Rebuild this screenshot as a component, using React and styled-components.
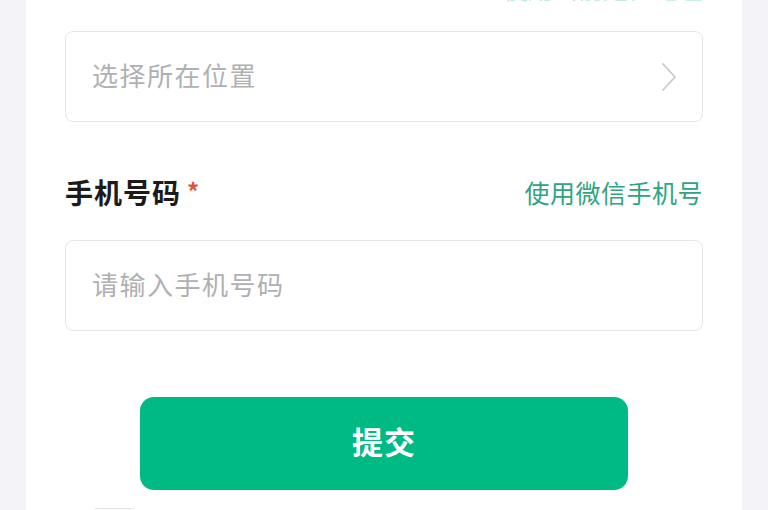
import styled, { createGlobalStyle } from "styled-components";

const GlobalStyle = createGlobalStyle`
    html, body {
        margin: 0;
        padding: 0;
        background: #f3f3f8;
        overflow: hidden;
    }
    * {
        box-sizing: border-box;
    }
`;

const Page = styled.div`
    height: 510px;
    overflow: hidden;
    padding: 0 26px;
    font-family: "Noto Sans CJK SC", "Noto Sans", sans-serif;
`;

const Card = styled.div`
    min-height: 100%;
    background: #ffffff;
    padding: 0 39px 20px;
    display: flex;
    flex-direction: column;
`;

// the page is scrolled: only the foot of this hint line still shows
const TopHint = styled.div`
    height: 31px;
    overflow: hidden;
    display: flex;
    justify-content: flex-end;
    align-items: flex-start;

    span {
        margin-top: -27px;
        font-size: 25px;
        line-height: 31px;
        color: #c4e9df;
    }
`;

const Field = styled.div`
    height: 91px;
    flex-shrink: 0;
    border: 1.5px solid #e7e7ea;
    border-radius: 8px;
    padding: 0 24px 5px 26px;
    display: flex;
    align-items: center;
    justify-content: space-between;
    margin-top: ${props => props.gap || 0}px;

    svg {
        margin-top: 5px;
    }
`;

const Placeholder = styled.span`
    font-size: 26px;
    letter-spacing: 1.5px;
    color: #b0b0b2;
`;

const LabelRow = styled.div`
    height: 40px;
    margin-top: 51px;
    display: flex;
    align-items: center;
    justify-content: space-between;
    padding-bottom: 3px;
`;

const Label = styled.span`
    font-size: 28px;
    font-weight: 700;
    letter-spacing: 1px;
    color: #1b1b1b;
    display: flex;
    align-items: flex-start;
`;

const Required = styled.span`
    color: #e0553f;
    font-size: 24px;
    font-weight: 700;
    line-height: 1;
    margin-left: 6px;
    margin-top: 7px;
`;

const LinkText = styled.span`
    font-size: 25px;
    letter-spacing: 0.5px;
    color: #2fa47f;
`;

const SubmitButton = styled.button`
    align-self: center;
    flex-shrink: 0;
    width: 488px;
    height: 93px;
    margin-top: 66px;
    padding: 0 0 7px;
    border: none;
    border-radius: 14px;
    background: #00ba84;
    color: #ffffff;
    font-family: inherit;
    font-size: 31px;
    font-weight: 700;
    letter-spacing: 1px;
    cursor: pointer;
`;

const AgreeRow = styled.div`
    margin-top: 18px;
    padding-left: 27px;
    display: flex;
    align-items: center;
`;

const CheckBox = styled.span`
    width: 45px;
    height: 30px;
    border: 1.5px solid #e3e3e6;
    border-radius: 6px;
`;

const Chevron = () => (
    <svg width="18" height="30" viewBox="0 0 18 30" fill="none">
        <path d="M3 2 L15 15 L3 28" stroke="#c9c9cc" strokeWidth="1.8" strokeLinecap="round" strokeLinejoin="round" />
    </svg>
);

export default function App() {
    return (
        <>
            <GlobalStyle />
            <Page>
                <Card>
                    <TopHint>
                        <span>使用当前定位地址</span>
                    </TopHint>
                    <Field>
                        <Placeholder>选择所在位置</Placeholder>
                        <Chevron />
                    </Field>
                    <LabelRow>
                        <Label>
                            手机号码<Required>*</Required>
                        </Label>
                        <LinkText>使用微信手机号</LinkText>
                    </LabelRow>
                    <Field gap={27}>
                        <Placeholder>请输入手机号码</Placeholder>
                    </Field>
                    <SubmitButton>提交</SubmitButton>
                    <AgreeRow>
                        <CheckBox />
                    </AgreeRow>
                </Card>
            </Page>
        </>
    );
}
